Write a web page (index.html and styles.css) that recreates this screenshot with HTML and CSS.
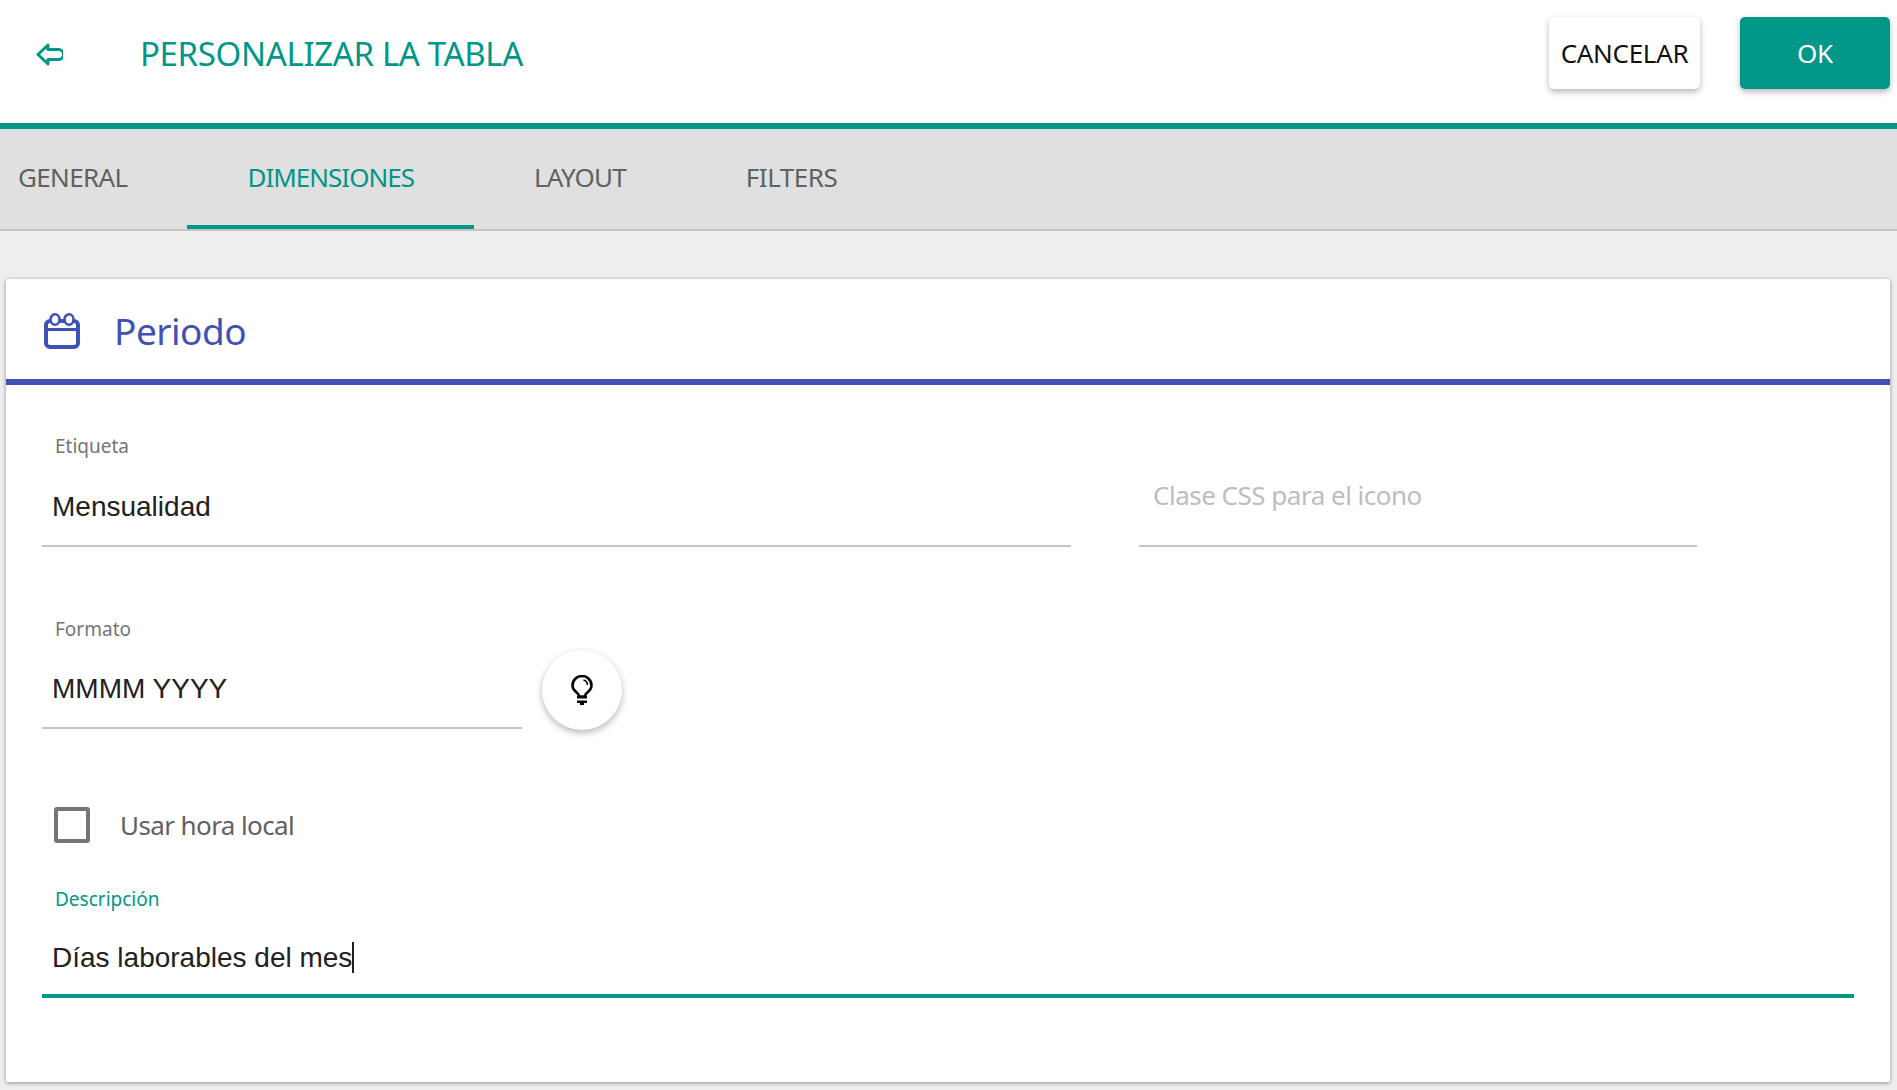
FILE: index.html
```html
<!DOCTYPE html>
<html lang="es">
<head>
<meta charset="utf-8">
<title>Personalizar la tabla</title>
<link rel="stylesheet" href="styles.css">
</head>
<body>
<header class="topbar">
  <button class="back" aria-label="Volver">
    <svg class="back-icon" viewBox="0 0 27 23"><path d="M12 2 L2 11.500 L12 21 V16.500 H22.500 A5 5 0 0 0 22.500 6.500 H12 Z" fill="none" stroke="#009688" stroke-width="3" stroke-linejoin="round"/></svg>
  </button>
  <h1 class="title">PERSONALIZAR LA TABLA</h1>
  <button class="btn btn-cancel">CANCELAR</button>
  <button class="btn btn-ok">OK</button>
</header>
<nav class="tabs">
  <a class="tab tab-first">GENERAL</a>
  <a class="tab tab-active">DIMENSIONES</a>
  <a class="tab">LAYOUT</a>
  <a class="tab tab-last">FILTERS</a>
</nav>
<main class="content">
  <section class="card">
    <div class="card-head">
      <svg class="cal-icon" viewBox="0 0 36 36"><rect x="2" y="8" width="32" height="26" rx="4" fill="none" stroke="#3f51b5" stroke-width="4"/><path d="M2 16.500 H34" stroke="#3f51b5" stroke-width="3"/><ellipse cx="11" cy="6.500" rx="4.500" ry="5.200" fill="#fff" stroke="#3f51b5" stroke-width="2.600"/><ellipse cx="25" cy="6.500" rx="4.500" ry="5.200" fill="#fff" stroke="#3f51b5" stroke-width="2.600"/></svg>
      <h2 class="card-title">Periodo</h2>
    </div>
    <div class="card-body">
      <div class="row row-1">
        <div class="field field-label">
          <label class="label">Etiqueta</label>
          <div class="value">Mensualidad</div>
        </div>
        <div class="field field-css">
          <div class="placeholder">Clase CSS para el icono</div>
        </div>
      </div>
      <div class="row row-2">
        <div class="field field-format">
          <label class="label">Formato</label>
          <div class="value">MMMM YYYY</div>
        </div>
        <button class="fab" aria-label="Ayuda">
          <svg class="bulb" viewBox="0 0 24 30"><path d="M8.500 21.500 V19.500 C8.500 18 2.500 16 2.500 10.500 A9.500 9.500 0 0 1 21.500 10.500 C21.500 16 15.500 18 15.500 19.500 V21.500 Z" fill="none" stroke="#000" stroke-width="2.600"/><path d="M7 21 H17 V23.500 H7 Z M7 25.500 H17 V28 H7 Z M10 28 H14 V30 H10 Z" fill="#000"/><path d="M13.500 5 A5.500 5.500 0 0 1 17.500 10" fill="none" stroke="#000" stroke-width="1.400"/></svg>
        </button>
      </div>
      <div class="check-row">
        <span class="checkbox"></span>
        <span class="check-label">Usar hora local</span>
      </div>
      <div class="field field-desc">
        <label class="label label-focus">Descripción</label>
        <div class="value">Días laborables del mes<span class="caret"></span></div>
      </div>
    </div>
  </section>
</main>
</body>
</html>
```
FILE: styles.css
```css
* { box-sizing: border-box; }
html, body { margin: 0; height: 100%; }
body {
  width: 1897px;
  height: 1090px;
  overflow: hidden;
  background: #eeeeee;
  font-family: "Noto Sans", sans-serif;
}
button { font-family: inherit; border: 0; cursor: pointer; }

.topbar {
  height: 129px;
  background: #fff;
  border-bottom: 6px solid #009688;
  display: flex;
  align-items: flex-start;
  padding: 17px 7px 0 36px;
}
.back { width: 27px; height: 23px; margin-top: 26px; padding: 0; background: none; display: block; }
.back-icon { width: 27px; height: 23px; display: block; }
.title {
  margin: 14px auto 0 77px;
  font-size: 33px;
  line-height: 46px;
  font-weight: 400;
  color: #009688;
  letter-spacing: -0.35px;
  white-space: nowrap;
}
.btn {
  height: 72px;
  border-radius: 5px;
  font-size: 26px;
  letter-spacing: -0.3px;
  box-shadow: 0 3px 6px rgba(0,0,0,.28);
}
.btn-cancel { width: 151px; background: #fff; color: #111; }
.btn-ok { width: 150px; margin-left: 40px; background: #009688; color: #fff; }

.tabs {
  height: 102px;
  background: #e0e0e0;
  border-bottom: 2px solid #c4c4c4;
  display: flex;
  font-size: 26px;
  color: #616161;
}
.tab {
  height: 100px;
  padding: 0 60px;
  line-height: 96px;
  letter-spacing: -0.8px;
  white-space: nowrap;
}
.tab-first { padding-left: 18px; letter-spacing: -0.65px; }
.tab-active { color: #009688; border-bottom: 4px solid #009688; letter-spacing: -1px; }
.tab-last { letter-spacing: -0.45px; }

.content { padding: 48px 7px 0 6px; }
.card {
  height: 803px;
  background: #fff;
  border-radius: 2px;
  box-shadow: 0 1px 4px rgba(0,0,0,.4);
}
.card-head {
  height: 106px;
  border-bottom: 6px solid #3f51b5;
  display: flex;
  align-items: center;
  padding: 0 0 0 38px;
}
.cal-icon { width: 36px; height: 36px; display: block; margin-top: 4px; }
.card-title {
  margin: 2px 0 0 34px;
  font-size: 37px;
  font-weight: 400;
  color: #3f51b5;
  letter-spacing: -0.5px;
}
.card-body { padding: 0 36px 0 36px; }
.row { display: flex; }
.row-1 { padding-top: 48px; gap: 68px; }
.row-2 { padding-top: 69px; align-items: flex-start; }
.field { border-bottom: 2px solid #c4c4c4; }
.field-label { width: 1029px; height: 114px; }
.field-css { width: 558px; height: 114px; padding: 45px 0 0 14px; }
.field-format { width: 480px; height: 113px; }
.field-format .value { margin-top: 30px; }
.field-desc { height: 112px; border-bottom: 4px solid #009688; margin-top: 43px; }
.field-desc .value { margin-top: 29px; }
.label {
  display: block;
  margin-left: 13px;
  font-size: 19px;
  line-height: 26px;
  color: #757575;
  letter-spacing: 0;
}
.label-focus { color: #009688; }
.value {
  margin: 31px 0 0 10px;
  font-family: "Liberation Sans", Arial, sans-serif;
  font-size: 28px;
  line-height: 34px;
  color: #212121;
  white-space: nowrap;
}
.placeholder {
  font-size: 26px;
  line-height: 34px;
  color: #bdbdbd;
  letter-spacing: -0.5px;
}
.caret {
  display: inline-block;
  width: 2px;
  height: 31px;
  background: #212121;
  vertical-align: -6px;
}
.fab {
  width: 80px;
  height: 80px;
  margin: 34px 0 0 20px;
  padding: 0;
  border-radius: 50%;
  background: #fff;
  box-shadow: 0 3px 7px rgba(0,0,0,.28);
  display: flex;
  align-items: center;
  justify-content: center;
}
.bulb { width: 24px; height: 30px; display: block; }
.check-row { display: flex; align-items: center; margin-top: 77px; padding-left: 12px; }
.checkbox {
  width: 36px;
  height: 36px;
  border: 4px solid #757575;
  border-radius: 3px;
  background: #fff;
}
.check-label {
  margin-left: 30px;
  font-size: 26px;
  line-height: 36px;
  color: #616161;
  letter-spacing: -0.6px;
}
```
